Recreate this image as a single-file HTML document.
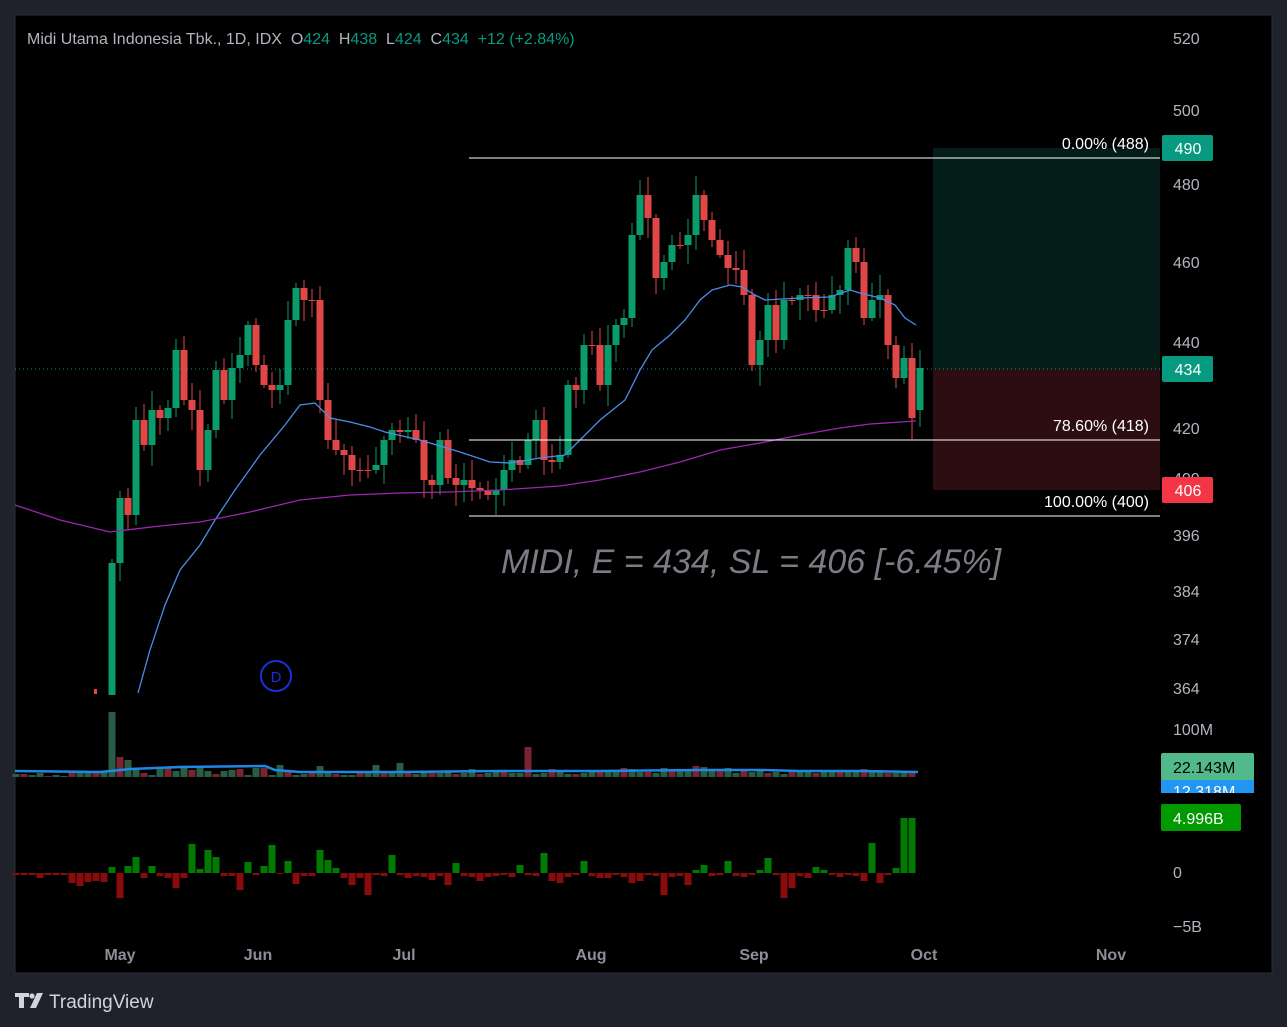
<!DOCTYPE html>
<html><head><meta charset="utf-8"><style>
html,body{margin:0;padding:0;background:#1f222b;width:1287px;height:1027px;overflow:hidden;font-family:"Liberation Sans",sans-serif}
#c{position:absolute;left:0;top:0}
</style></head><body>
<svg id="c" width="1287" height="1027" xmlns="http://www.w3.org/2000/svg" font-family="Liberation Sans, sans-serif">
<rect x="0" y="0" width="1287" height="1027" fill="#1f222b"/>
<rect x="15" y="15" width="1257" height="958" fill="#000" stroke="#2a2e39"/>
<rect x="933" y="148" width="227" height="221" fill="#051d18"/>
<rect x="933" y="369" width="227" height="121" fill="#2c0d11"/>
<line x1="15" y1="369" x2="1160" y2="369" stroke="#089981" stroke-dasharray="1,3"/>
<g id="cd"></g>
<polyline fill="none" stroke="#4a8ee8" stroke-width="1.3" points="138,693 150,650 165,605 180,570 200,545 215,520 235,490 260,455 285,425 300,405 315,403 330,418 350,422 370,427 385,432 420,440 460,452 490,462 510,463 540,458 565,455 580,440 600,420 625,400 640,370 652,350 670,335 685,320 700,300 712,290 730,285 742,287 755,295 765,300 800,298 830,297 850,290 860,293 880,298 895,305 905,318 916,325"/>
<polyline fill="none" stroke="#9c27b0" stroke-width="1.3" points="15,505 60,520 110,532 160,526 200,522 250,512 300,500 350,495 400,493 450,492 500,490 560,486 600,480 640,472 680,462 720,450 760,443 800,435 840,428 870,424 916,421"/>
<line x1="469" y1="158" x2="1160" y2="158" stroke="#fff"/>
<line x1="469" y1="440" x2="1160" y2="440" stroke="#fff"/>
<line x1="469" y1="516" x2="1160" y2="516" stroke="#fff"/>
<g font-size="16" fill="#fff" text-anchor="end">
<text x="1149" y="149">0.00% (488)</text>
<text x="1149" y="431">78.60% (418)</text>
<text x="1149" y="507">100.00% (400)</text>
</g>
<text x="501" y="573" font-size="34" font-style="italic" fill="#7a7d85">MIDI, E = 434, SL = 406 [-6.45%]</text>
<circle cx="276" cy="676" r="15" fill="none" stroke="#1a2fd6" stroke-width="2"/>
<text x="276" y="682" font-size="15" fill="#1a2fd6" text-anchor="middle">D</text>
<g id="vol"></g>
<polyline fill="none" stroke="#1e88e5" stroke-width="2.5" points="15,771 100,772 130,769 180,767 265,766 275,770 300,772 350,772 400,772 500,771 600,771 700,770 760,770 800,771 860,771 918,772"/>
<g id="ind"></g>
<text x="27" y="44" font-size="16" fill="#b2b5be" xml:space="preserve">Midi Utama Indonesia Tbk., 1D, IDX  O<tspan fill="#089981">424</tspan>  H<tspan fill="#089981">438</tspan>  L<tspan fill="#089981">424</tspan>  C<tspan fill="#089981">434</tspan>  <tspan fill="#089981">+12 (+2.84%)</tspan></text>
<g font-size="16" fill="#b2b5be">
<text x="1173" y="44">520</text><text x="1173" y="116">500</text><text x="1173" y="190">480</text>
<text x="1173" y="268">460</text><text x="1173" y="348">440</text><text x="1173" y="434">420</text>
<text x="1173" y="484">400</text>
<text x="1173" y="541">396</text><text x="1173" y="597">384</text><text x="1173" y="645">374</text>
<text x="1173" y="694">364</text><text x="1173" y="735">100M</text>
<text x="1173" y="878">0</text><text x="1173" y="932">−5B</text>
</g>
<rect x="1162" y="135" width="51" height="26" rx="2" fill="#089981"/><text x="1188" y="154" font-size="16" fill="#fff" text-anchor="middle">490</text>
<rect x="1162" y="356" width="51" height="26" rx="2" fill="#089981"/><text x="1188" y="375" font-size="16" fill="#fff" text-anchor="middle">434</text>
<rect x="1162" y="477" width="51" height="26" rx="2" fill="#f23645"/><text x="1188" y="496" font-size="16" fill="#fff" text-anchor="middle">406</text>
<svg x="1161" y="779" width="93" height="14"><rect width="93" height="14" fill="#2196f3"/><text x="12" y="18" font-size="16" fill="#fff">12.318M</text></svg>
<rect x="1161" y="753" width="93" height="27" rx="2" fill="#52b98a"/><text x="1173" y="773" font-size="16" fill="#000">22.143M</text>
<rect x="1161" y="804" width="80" height="27" rx="2" fill="#009900"/><text x="1173" y="824" font-size="16" fill="#fff">4.996B</text>
<g font-size="16" fill="#8c8f98" font-weight="bold" text-anchor="middle">
<text x="120" y="960">May</text><text x="258" y="960">Jun</text><text x="404" y="960">Jul</text>
<text x="591" y="960">Aug</text><text x="754" y="960">Sep</text><text x="924" y="960">Oct</text><text x="1111" y="960">Nov</text>
</g>
<g fill="#d1d4dc"><path d="M15 993h14v4h-5v11h-5v-11h-4z"/><circle cx="32" cy="996" r="2.6"/><path d="M37 993h6l-7 15h-6z"/></g>
<text x="49" y="1008" font-size="19" fill="#d1d4dc">TradingView</text>
</svg>
<script>
var C=[563,498,515,420,445,410,418,408,350,400,410,470,430,370,400,368,355,325,365,385,390,385,320,288,300,300,400,440,450,455,470,470,470,465,440,430,432,430,440,480,485,440,478,485,480,488,490,495,490,470,460,465,440,420,460,462,455,385,390,345,345,385,345,325,318,235,195,218,278,262,245,245,235,195,220,240,255,268,270,295,365,340,305,340,300,300,295,295,310,310,295,290,248,262,318,300,295,345,378,358,418,368];
var ns="http://www.w3.org/2000/svg";function el(g,t,a){var e=document.createElementNS(ns,t);for(var k in a)e.setAttribute(k,a[k]);document.getElementById(g).appendChild(e);}
var prev=695;var G="#0b9c6c",R="#e04848";
el("cd","rect",{x:94,y:689,width:3,height:5,fill:R});
for(var i=0;i<C.length;i++){var x=112+i*8;var o=(i==C.length-1)?410:prev,c=C[i];if(i==C.length-2){o=358;}
var up=c<o,col=up?G:R,t=Math.min(o,c),b=Math.max(o,c);var h=((i*37)%17)+4,l=((i*53)%19)+3;
el("cd","line",{x1:x,y1:t-h,x2:x,y2:Math.min(b+l,694),stroke:col,"stroke-width":1});
el("cd","rect",{x:x-3.5,y:t,width:7,height:Math.max(b-t,1),fill:col});prev=c;}
var V=[3,3,2,4,1,2,1,6,6,6,6,6,65,20,17,8,4,2,8,10,6,9,7,10,6,3,6,7,8,2,9,9,2,12,7,2,3,4,11,4,3,2,2,6,6,12,5,6,14,5,3,4,6,4,5,3,4,8,3,4,6,5,4,4,30,3,4,8,5,3,3,4,6,7,6,6,9,8,5,5,4,9,6,7,7,11,10,6,8,9,4,6,5,7,4,5,3,5,6,6,4,6,5,6,5,6,8,5,6,4,4,6,5,3,6,6,9,10];
for(var i=0;i<=112;i++){var x=16+i*8,v=V[i]||5;var up=(i%3)!=1;el("vol","rect",{x:x-3.5,y:777-v,width:7,height:v,fill:up?"#2a5c45":"#7a2430"});}
var I=[-2,-2,-2,-5,-2,-2,-2,-10,-13,-9,-8,-9,6,-25,7,16,-5,7,-3,-5,-15,-5,29,4,23,16,-3,-3,-17,11,-2,7,28,-1,12,-11,-3,-3,23,13,5,-5,-12,-5,-22,-2,-3,18,-2,-5,-3,-4,-7,-3,-12,10,-3,-4,-8,-4,-3,-2,-4,8,-2,-3,20,-8,-10,-4,-2,12,-3,-5,-5,-2,-4,-10,-8,-2,-3,-22,-4,-3,-12,3,8,-3,-2,12,-3,-4,-2,3,15,-2,-25,-15,-3,-5,6,3,-2,-4,-2,-3,-8,30,-10,-2,-5,9,-12,-12,20,-5,-4,-3];
for(var i=0;i<=112;i++){var x=16+i*8,v=I[i]||-2;if(i==110)v=5;if(i>=111)v=55;el("ind","rect",{x:x-3.5,y:v>0?873-v:873,width:7,height:Math.abs(v),fill:v>0?"#007a00":"#8a0b0b"});}
</script>
</body></html>
